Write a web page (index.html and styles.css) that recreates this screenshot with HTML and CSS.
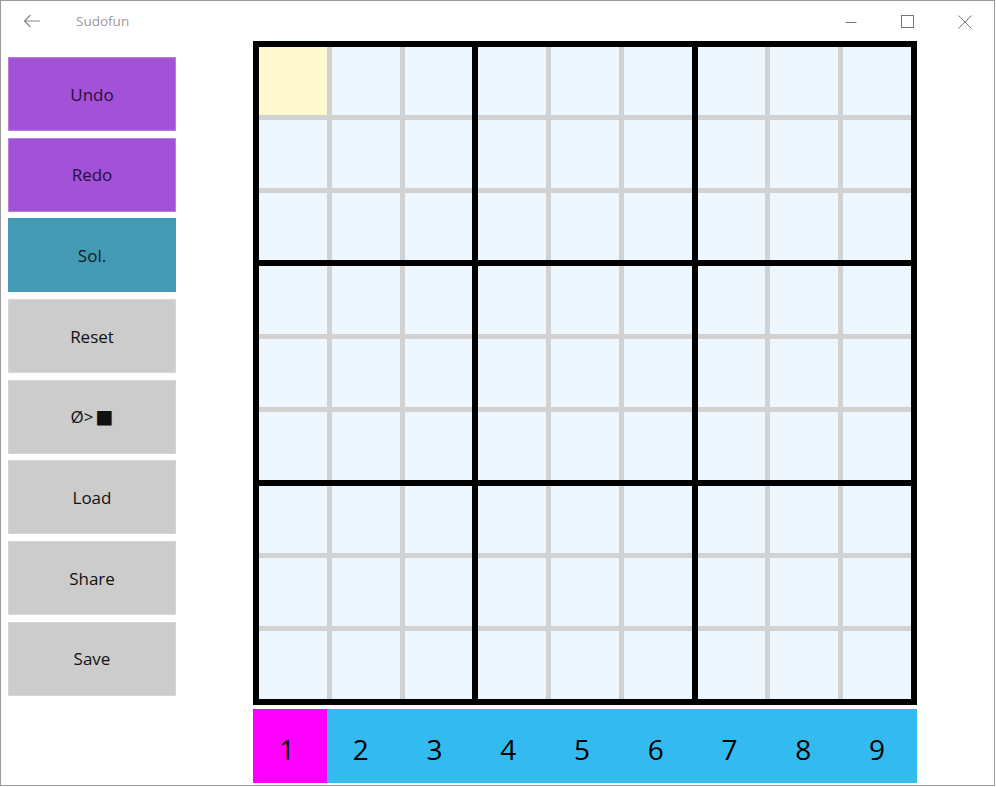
FILE: index.html
```html
<!DOCTYPE html>
<html>
<head>
<meta charset="utf-8">
<title>Sudofun</title>
<link rel="stylesheet" href="styles.css">
</head>
<body>
<div class="window">
  <div class="titlebar">
    <svg class="back" width="18" height="14" viewBox="0 0 18 14"><path d="M17 7H1.5M7.5 1L1.5 7L7.5 13" fill="none" stroke="#8a8a8a" stroke-width="1.2"/></svg>
    <span class="title">Sudofun</span>
    <div class="controls">
      <svg class="ctl" width="12" height="12" viewBox="0 0 12 12"><path d="M0.5 6.5H11.5" stroke="#777" stroke-width="1"/></svg>
      <svg class="ctl" width="13" height="13" viewBox="0 0 13 13"><rect x="0.5" y="0.5" width="12" height="12" fill="none" stroke="#777" stroke-width="1"/></svg>
      <svg class="ctl" width="14" height="14" viewBox="0 0 14 14"><path d="M0.5 0.5L13.5 13.5M13.5 0.5L0.5 13.5" stroke="#777" stroke-width="1"/></svg>
    </div>
  </div>
  <div class="main">
    <div class="sidebar">
      <div class="btn purple">Undo</div>
      <div class="btn purple">Redo</div>
      <div class="btn teal">Sol.</div>
      <div class="btn gray">Reset</div>
      <div class="btn gray">Ø&gt;<span class="sq">■</span></div>
      <div class="btn gray">Load</div>
      <div class="btn gray">Share</div>
      <div class="btn gray">Save</div>
    </div>
    <div class="play">
      <div class="board">
        <div class="box"><div class="cell sel"></div><div class="cell"></div><div class="cell"></div><div class="cell"></div><div class="cell"></div><div class="cell"></div><div class="cell"></div><div class="cell"></div><div class="cell"></div></div>
        <div class="box"><div class="cell"></div><div class="cell"></div><div class="cell"></div><div class="cell"></div><div class="cell"></div><div class="cell"></div><div class="cell"></div><div class="cell"></div><div class="cell"></div></div>
        <div class="box"><div class="cell"></div><div class="cell"></div><div class="cell"></div><div class="cell"></div><div class="cell"></div><div class="cell"></div><div class="cell"></div><div class="cell"></div><div class="cell"></div></div>
        <div class="box"><div class="cell"></div><div class="cell"></div><div class="cell"></div><div class="cell"></div><div class="cell"></div><div class="cell"></div><div class="cell"></div><div class="cell"></div><div class="cell"></div></div>
        <div class="box"><div class="cell"></div><div class="cell"></div><div class="cell"></div><div class="cell"></div><div class="cell"></div><div class="cell"></div><div class="cell"></div><div class="cell"></div><div class="cell"></div></div>
        <div class="box"><div class="cell"></div><div class="cell"></div><div class="cell"></div><div class="cell"></div><div class="cell"></div><div class="cell"></div><div class="cell"></div><div class="cell"></div><div class="cell"></div></div>
        <div class="box"><div class="cell"></div><div class="cell"></div><div class="cell"></div><div class="cell"></div><div class="cell"></div><div class="cell"></div><div class="cell"></div><div class="cell"></div><div class="cell"></div></div>
        <div class="box"><div class="cell"></div><div class="cell"></div><div class="cell"></div><div class="cell"></div><div class="cell"></div><div class="cell"></div><div class="cell"></div><div class="cell"></div><div class="cell"></div></div>
        <div class="box"><div class="cell"></div><div class="cell"></div><div class="cell"></div><div class="cell"></div><div class="cell"></div><div class="cell"></div><div class="cell"></div><div class="cell"></div><div class="cell"></div></div>
      </div>
      <div class="numbar">
        <div class="num active">1</div>
        <div class="num">2</div>
        <div class="num">3</div>
        <div class="num">4</div>
        <div class="num">5</div>
        <div class="num">6</div>
        <div class="num">7</div>
        <div class="num">8</div>
        <div class="num">9</div>
      </div>
    </div>
  </div>
</div>
</body>
</html>
```

FILE: styles.css
```css
html, body {
  margin: 0;
  padding: 0;
  background: #ffffff;
  font-family: "Open Sans", "Noto Sans", sans-serif;
}
.window {
  width: 993px;
  height: 784px;
  border: 1px solid #9a9a9a;
  background: #ffffff;
  overflow: hidden;
}
.titlebar {
  height: 31px;
  display: flex;
  align-items: center;
}
.back {
  margin-left: 22px;
  margin-top: 8px;
}
.title {
  margin-left: 35px;
  margin-top: 8px;
  font-size: 13.5px;
  color: #9b9b9b;
}
.controls {
  margin-left: auto;
  margin-right: 22px;
  margin-top: 10px;
  display: flex;
  align-items: center;
  gap: 44px;
}
.main {
  display: flex;
  padding-left: 7px;
}
.sidebar {
  width: 168px;
  margin-top: 25px;
  display: flex;
  flex-direction: column;
  gap: 6.7px;
}
.btn {
  height: 74px;
  display: flex;
  align-items: center;
  justify-content: center;
  font-size: 17px;
  color: #111;
  box-sizing: border-box;
}
.sq {
  font-family: "DejaVu Sans", sans-serif;
  font-size: 19px;
  margin-left: 2px;
  line-height: 1;
}
.purple {
  background: #a152d7;
  border: 1px solid #b77ee0;
  color: #2a0c3c;
}
.teal {
  background: #4499b4;
  color: #0c1c22;
}
.gray {
  background: #cccccc;
  border: 1px solid #d6d6d6;
}
.play {
  margin-left: 77px;
  margin-top: 9px;
  width: 664px;
}
.board {
  width: 664px;
  height: 664px;
  box-sizing: border-box;
  background: #000;
  padding: 6px;
  display: grid;
  grid-template-columns: repeat(3, 1fr);
  grid-template-rows: repeat(3, 1fr);
  gap: 6px;
}
.box {
  background: #d2d2d2;
  display: grid;
  grid-template-columns: repeat(3, 1fr);
  grid-template-rows: repeat(3, 1fr);
  gap: 5px;
}
.cell {
  background: #eef6fe;
}
.cell.sel {
  background: #fff8d0;
}
.numbar {
  margin-top: 4px;
  height: 74px;
  display: grid;
  grid-template-columns: repeat(9, 1fr);
  background: #33baee;
}
.num {
  display: flex;
  align-items: center;
  justify-content: center;
  font-size: 28px;
  color: #000;
  padding-right: 6px;
  padding-top: 6px;
}
.num.active {
  background: #ff00ff;
}
```
